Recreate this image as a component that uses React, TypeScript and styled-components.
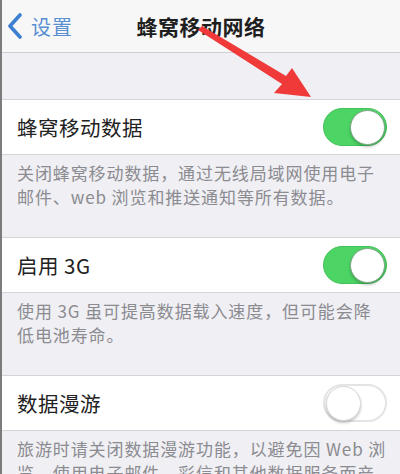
import React, { FC } from 'react'
import styled, { createGlobalStyle } from 'styled-components'

const GlobalStyle = createGlobalStyle`
  html, body {
    margin: 0;
    padding: 0;
    background: #efeff4;
  }
  body {
    font-family: "Noto Sans CJK SC", "Noto Sans", "Liberation Sans", sans-serif;
  }
`

const Page = styled.div`
  position: relative;
  width: 400px;
  height: 474px;
  overflow: hidden;
  background: #efeff4;
  border-left: 2px solid #7c7c7c;
  box-sizing: border-box;
`

const NavBar = styled.div`
  height: 52px;
  background: #f7f7f8;
  border-bottom: 1px solid #cfcfd3;
  display: flex;
  align-items: center;
  position: relative;
`

const BackButton = styled.div`
  display: flex;
  align-items: center;
  gap: 8px;
  padding-left: 5px;
  color: #5a8fd2;
  font-size: 20px;
  letter-spacing: 1px;
`

const Title = styled.div`
  position: absolute;
  left: 0;
  right: 0;
  top: 0;
  bottom: 0;
  display: flex;
  align-items: center;
  justify-content: center;
  font-size: 21px;
  font-weight: 700;
  color: #1e1e1e;
  letter-spacing: 0.5px;
  pointer-events: none;
`

const TopGap = styled.div`
  height: 46px;
`

const Row = styled.div`
  height: 56px;
  background: #fff;
  border-top: 1px solid #d4d4d8;
  border-bottom: 1px solid #d4d4d8;
  box-sizing: border-box;
  display: flex;
  align-items: center;
  justify-content: space-between;
  padding: 0 13px 0 15px;
`

const Label = styled.span`
  font-size: 20.5px;
  color: #222;
  letter-spacing: 0.5px;
`

const Footer = styled.div`
  padding: 6px 10px 0 15px;
  height: 82px;
  box-sizing: border-box;
  font-size: 17px;
  line-height: 24px;
  letter-spacing: 0.9px;
  white-space: nowrap;
  color: #8b8b90;
`

const Track = styled.div<{ $on: boolean }>`
  width: 64px;
  height: 38px;
  border-radius: 19px;
  box-sizing: border-box;
  background: ${(p) => (p.$on ? '#4cd464' : '#fff')};
  border: ${(p) => (p.$on ? '1px solid #45c25c' : '2px solid #e4e4e6')};
  display: flex;
  align-items: center;
  justify-content: ${(p) => (p.$on ? 'flex-end' : 'flex-start')};
  padding: 0 1px;
`

const Knob = styled.div<{ $on: boolean }>`
  width: 35px;
  height: 35px;
  border-radius: 50%;
  background: #fff;
  box-sizing: border-box;
  border: 1px solid ${(p) => (p.$on ? '#7ea686' : '#d6d6d6')};
  box-shadow: 0 2px 3px rgba(0, 0, 0, 0.22);
`

const ArrowLayer = styled.svg`
  position: absolute;
  left: 0;
  top: 0;
  pointer-events: none;
`

const Toggle: FC<{ on: boolean }> = ({ on }) => (
  <Track $on={on}>
    <Knob $on={on} />
  </Track>
)

const settings = [
  {
    label: '蜂窝移动数据',
    on: true,
    note: ['关闭蜂窝移动数据，通过无线局域网使用电子', '邮件、web 浏览和推送通知等所有数据。'],
  },
  {
    label: '启用 3G',
    on: true,
    note: ['使用 3G 虽可提高数据载入速度，但可能会降', '低电池寿命。'],
  },
  {
    label: '数据漫游',
    on: false,
    note: ['旅游时请关闭数据漫游功能，以避免因 Web 浏', '览、使用电子邮件、彩信和其他数据服务而产'],
  },
]

const App: FC = () => {
  return (
    <>
      <GlobalStyle />
      <Page>
        <NavBar>
          <BackButton>
            <svg width="16" height="26" viewBox="0 0 16 26">
              <path d="M13 2 L3 13 L13 24" fill="none" stroke="#3d7fd0" strokeWidth="3.6" strokeLinecap="round" strokeLinejoin="round" />
            </svg>
            <span>设置</span>
          </BackButton>
          <Title>蜂窝移动网络</Title>
        </NavBar>
        <TopGap />
        {settings.map((s) => (
          <React.Fragment key={s.label}>
            <Row>
              <Label>{s.label}</Label>
              <Toggle on={s.on} />
            </Row>
            <Footer>
              {s.note.map((line) => (
                <div key={line}>{line}</div>
              ))}
            </Footer>
          </React.Fragment>
        ))}
        <ArrowLayer width="400" height="474" viewBox="0 0 400 474">
          <polygon
            points="196,30 200,26 284,76 290,68 309,97 272,93 280,84"
            fill="#f03a3a"
          />
        </ArrowLayer>
      </Page>
    </>
  )
}

export default App
